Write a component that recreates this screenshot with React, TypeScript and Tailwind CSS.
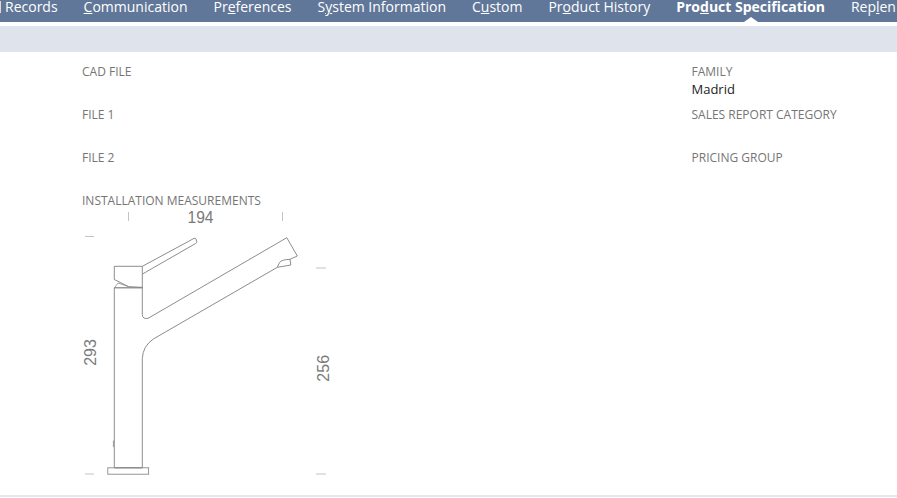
import React from 'react';

const tabs: { before: string; key: string; after: string; active?: boolean }[] = [
  { before: '', key: 'C', after: 'ommunication' },
  { before: 'Pr', key: 'e', after: 'ferences' },
  { before: 'S', key: 'y', after: 'stem Information' },
  { before: 'C', key: 'u', after: 'stom' },
  { before: 'Pr', key: 'o', after: 'duct History' },
  { before: 'Pro', key: 'd', after: 'uct Specification', active: true },
  { before: 'Rep', key: 'l', after: 'en' },
];

const Field: React.FC<{ label: string; value?: string }> = ({ label, value }) => (
  <div className="h-[43px]">
    <div className="text-[12px] leading-[17px] text-[#757575]">{label}</div>
    {value && <div className="text-[13px] leading-[18px] text-[#222222]">{value}</div>}
  </div>
);

const FaucetDrawing: React.FC = () => (
  <svg width="260" height="284" viewBox="82 209 260 284" className="block" fill="none" stroke="#808080" strokeWidth="0.9">
    <g stroke="#bdbdbd">
      <path d="M128.5 212v9M282.5 212v9" />
      <path d="M85 236.5h9M316 268h10M85 474h9M316 474h10" />
    </g>
    <text x="200.5" y="222.5" fontSize="15.6" textAnchor="middle" fill="#7a7a7a" stroke="none" fontFamily="'Liberation Sans', sans-serif">194</text>
    <text transform="translate(96 352.5) rotate(-90)" fontSize="16" textAnchor="middle" fill="#7a7a7a" stroke="none" fontFamily="'Liberation Sans', sans-serif">293</text>
    <text transform="translate(329 368.3) rotate(-90)" fontSize="16" textAnchor="middle" fill="#7a7a7a" stroke="none" fontFamily="'Liberation Sans', sans-serif">256</text>
    {/* handle */}
    <path d="M142.3 266.3L194 238.4Q195.5 237.8 196 239L196.8 241.5Q197 242.8 195.8 243.4L142.5 274" />
    {/* lever head */}
    <path d="M142.3 266.3H114.3V279.5L128.5 286.6L142.3 287.4" />
    <path d="M118 283L114.5 287.8M118 283L128.5 286.6" strokeWidth="0.7" />
    <path d="M114.3 287.8H142.3" strokeWidth="1.2" />
    {/* body and spout */}
    <path d="M114.3 287.8V467.8" />
    <path d="M142.3 266.3V314.5Q142.5 319.8 148.3 318.2L286.8 237.7L297.3 256L290 259.3" />
    <path d="M142.3 467.8V358.3Q143 346 153.3 339L277.3 267.3" />
    {/* nozzle */}
    <path d="M290 259.3Q282 259.5 279.5 262.5L277.3 267.3L290.8 265L290 259.3Z" />
    <path d="M113.4 440.5v6.5" stroke="#9a9a9a" strokeWidth="1" />
    {/* base */}
    <path d="M114.3 467.8H142.3" strokeWidth="1.2" />
    <rect x="107.8" y="467.8" width="40.8" height="6.4" stroke="#8a8a8a" />
  </svg>
);

export default function App() {
  return (
    <div className="h-[498px] w-full overflow-hidden bg-white font-['Open_Sans',sans-serif]">
      <nav className="relative flex h-[22px] items-start gap-[26px] overflow-hidden whitespace-nowrap bg-[#607799] text-[14px] leading-[14px] text-white">
        <span className="ml-[1px] shrink-0">
          <span className="absolute left-0 top-[1px] h-[12px] w-[1px] bg-[#e8d8c8]" />
          <span className="pl-[4px]">Records</span>
        </span>
        {tabs.map((t) => (
          <span key={t.before + t.key + t.after} className={`shrink-0 ${t.active ? 'font-bold' : ''}`}>
            {t.before}
            <u>{t.key}</u>
            {t.after}
          </span>
        ))}
        <span className="absolute bottom-0 left-[744px] h-0 w-0 border-x-[7px] border-b-[5px] border-x-transparent border-b-white" />
      </nav>
      <div className="mt-[4px] h-[26px] bg-[#dfe3eb]" />
      <div className="flex h-[445px] border-b-2 border-[#e4e7ee] pl-[82px] pt-[11px]">
        <div className="w-[609.5px]">
          <Field label="CAD FILE" />
          <Field label="FILE 1" />
          <Field label="FILE 2" />
          <div className="text-[12px] leading-[17px] text-[#757575]">INSTALLATION MEASUREMENTS</div>
          <FaucetDrawing />
        </div>
        <div>
          <Field label="FAMILY" value="Madrid" />
          <Field label="SALES REPORT CATEGORY" />
          <Field label="PRICING GROUP" />
        </div>
      </div>
    </div>
  );
}
